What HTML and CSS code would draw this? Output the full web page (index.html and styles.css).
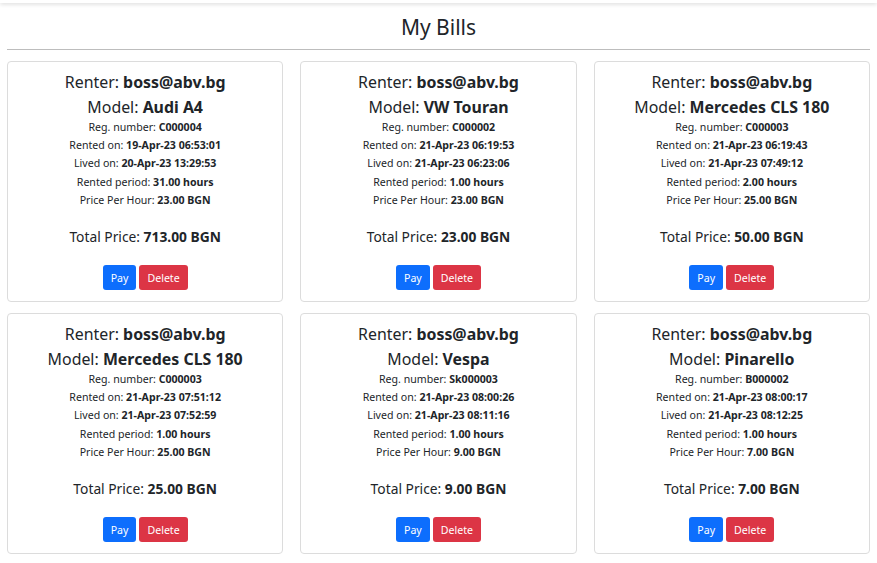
FILE: index.html
```html
<!DOCTYPE html>
<html>
<head>
<meta charset="utf-8">
<link rel="stylesheet" href="styles.css">
</head>
<body>
<div class="topbar"></div>
<main class="page">
  <h1 class="title">My Bills</h1>
  <hr class="rule">
  <div class="grid">
    <div class="card">
      <div class="big">Renter: <b>boss@abv.bg</b></div>
      <div class="big model">Model: <b>Audi A4</b></div>
      <div class="small">Reg. number: <b>C000004</b></div>
      <div class="small">Rented on: <b>19-Apr-23 06:53:01</b></div>
      <div class="small">Lived on: <b>20-Apr-23 13:29:53</b></div>
      <div class="small">Rented period: <b>31.00 hours</b></div>
      <div class="small">Price Per Hour: <b>23.00 BGN</b></div>
      <div class="total">Total Price: <b>713.00 BGN</b></div>
      <div class="actions"><button class="btn pay">Pay</button><button class="btn del">Delete</button></div>
    </div>
    <div class="card">
      <div class="big">Renter: <b>boss@abv.bg</b></div>
      <div class="big model">Model: <b>VW Touran</b></div>
      <div class="small">Reg. number: <b>C000002</b></div>
      <div class="small">Rented on: <b>21-Apr-23 06:19:53</b></div>
      <div class="small">Lived on: <b>21-Apr-23 06:23:06</b></div>
      <div class="small">Rented period: <b>1.00 hours</b></div>
      <div class="small">Price Per Hour: <b>23.00 BGN</b></div>
      <div class="total">Total Price: <b>23.00 BGN</b></div>
      <div class="actions"><button class="btn pay">Pay</button><button class="btn del">Delete</button></div>
    </div>
    <div class="card">
      <div class="big">Renter: <b>boss@abv.bg</b></div>
      <div class="big model">Model: <b>Mercedes CLS 180</b></div>
      <div class="small">Reg. number: <b>C000003</b></div>
      <div class="small">Rented on: <b>21-Apr-23 06:19:43</b></div>
      <div class="small">Lived on: <b>21-Apr-23 07:49:12</b></div>
      <div class="small">Rented period: <b>2.00 hours</b></div>
      <div class="small">Price Per Hour: <b>25.00 BGN</b></div>
      <div class="total">Total Price: <b>50.00 BGN</b></div>
      <div class="actions"><button class="btn pay">Pay</button><button class="btn del">Delete</button></div>
    </div>
    <div class="card">
      <div class="big">Renter: <b>boss@abv.bg</b></div>
      <div class="big model">Model: <b>Mercedes CLS 180</b></div>
      <div class="small">Reg. number: <b>C000003</b></div>
      <div class="small">Rented on: <b>21-Apr-23 07:51:12</b></div>
      <div class="small">Lived on: <b>21-Apr-23 07:52:59</b></div>
      <div class="small">Rented period: <b>1.00 hours</b></div>
      <div class="small">Price Per Hour: <b>25.00 BGN</b></div>
      <div class="total">Total Price: <b>25.00 BGN</b></div>
      <div class="actions"><button class="btn pay">Pay</button><button class="btn del">Delete</button></div>
    </div>
    <div class="card">
      <div class="big">Renter: <b>boss@abv.bg</b></div>
      <div class="big model">Model: <b>Vespa</b></div>
      <div class="small">Reg. number: <b>Sk000003</b></div>
      <div class="small">Rented on: <b>21-Apr-23 08:00:26</b></div>
      <div class="small">Lived on: <b>21-Apr-23 08:11:16</b></div>
      <div class="small">Rented period: <b>1.00 hours</b></div>
      <div class="small">Price Per Hour: <b>9.00 BGN</b></div>
      <div class="total">Total Price: <b>9.00 BGN</b></div>
      <div class="actions"><button class="btn pay">Pay</button><button class="btn del">Delete</button></div>
    </div>
    <div class="card">
      <div class="big">Renter: <b>boss@abv.bg</b></div>
      <div class="big model">Model: <b>Pinarello</b></div>
      <div class="small">Reg. number: <b>B000002</b></div>
      <div class="small">Rented on: <b>21-Apr-23 08:00:17</b></div>
      <div class="small">Lived on: <b>21-Apr-23 08:12:25</b></div>
      <div class="small">Rented period: <b>1.00 hours</b></div>
      <div class="small">Price Per Hour: <b>7.00 BGN</b></div>
      <div class="total">Total Price: <b>7.00 BGN</b></div>
      <div class="actions"><button class="btn pay">Pay</button><button class="btn del">Delete</button></div>
    </div>
  </div>
</main>
</body>
</html>
```
FILE: styles.css
```css
html, body {
  margin: 0;
  padding: 0;
  background: #fff;
}
body {
  font-family: "Noto Sans", "Open Sans", sans-serif;
  color: #212529;
  overflow: hidden;
}
.topbar {
  height: 3px;
  background: #fff;
  box-shadow: 0 1px 4px rgba(0,0,0,0.18);
}
.page {
  padding: 0 7px;
}
.title {
  margin: 0;
  height: 46px;
  line-height: 48px;
  text-align: center;
  font-size: 21px;
  font-weight: 400;
}
.rule {
  margin: 0;
  border: 0;
  border-top: 1px solid #bdbdbd;
}
.grid {
  display: grid;
  grid-template-columns: repeat(3, 1fr);
  column-gap: 17px;
  row-gap: 11px;
  margin-top: 11px;
}
.card {
  border: 1px solid #dcdcdc;
  border-radius: 4px;
  padding: 8px 0 11px;
  text-align: center;
  height: 241px;
  box-sizing: border-box;
}
.big {
  font-size: 15.9px;
  line-height: 25px;
}
.model {
  margin-bottom: -2px;
}
.small {
  font-size: 10.6px;
  line-height: 18.2px;
}
.total {
  font-size: 13.8px;
  line-height: 20px;
  margin-top: 18px;
}
b {
  font-weight: 700;
}
.actions {
  display: flex;
  justify-content: center;
  gap: 3px;
  margin-top: 18px;
}
.btn {
  font-family: inherit;
  font-size: 10.6px;
  color: #fff;
  border: 0;
  border-radius: 3px;
  height: 25px;
  padding: 0 8px;
}
.pay { background: #0d6efd; }
.del { background: #dc3545; }
```
